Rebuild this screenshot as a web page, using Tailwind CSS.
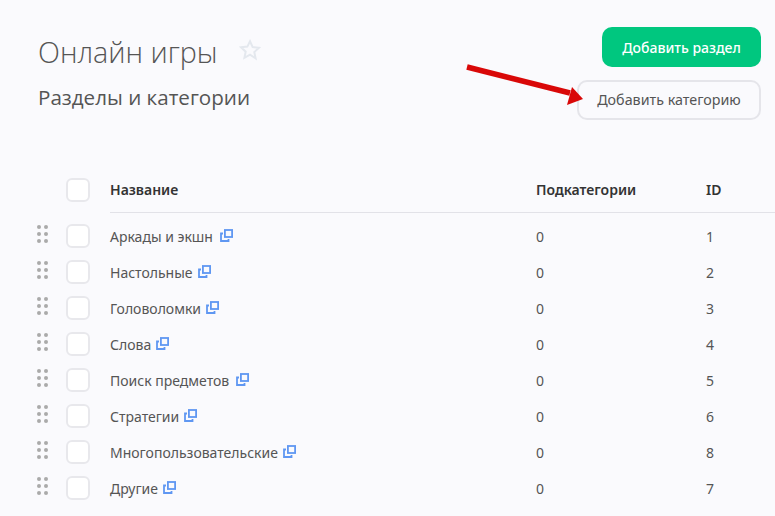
<!DOCTYPE html>
<html><head><meta charset="utf-8">
<script src="https://cdn.jsdelivr.net/npm/@tailwindcss/browser@4"></script>
</head>
<body class="m-0 h-[516px] w-[775px] overflow-hidden bg-[#fafafd] font-['Noto_Sans',sans-serif] text-[14px] text-[#555]">
<div class="relative">
  <div class="flex justify-between pl-[38px] pr-[14px] pt-[27px]">
    <div>
      <div class="flex items-center h-[50px] -mt-[2px]">
        <h1 class="mt-[4px] font-['Open_Sans',sans-serif] font-light text-[28.7px] leading-[50px] text-[#555]">Онлайн игры</h1>
        <svg class="ml-[21px]" width="22" height="22" viewBox="0 0 24 24" fill="none" stroke="#e4e8ee" stroke-width="2.2"><path d="M12 2.5l2.9 6.3 6.9.8-5.1 4.7 1.4 6.8L12 17.1l-6.1 3.5 1.4-6.8-5.1-4.7 6.9-.8z"/></svg>
      </div>
      <h2 class="font-['Open_Sans',sans-serif] text-[20.6px] leading-[30px] mt-[7px] text-[#555]">Разделы и категории</h2>
    </div>
    <div class="flex flex-col items-end gap-[13px]">
      <div class="flex h-[40px] w-[159px] items-center justify-center rounded-[10px] bg-[#00c77f] text-[14px] font-medium text-white">Добавить раздел</div>
      <div class="flex h-[40px] w-[184px] items-center justify-center rounded-[10px] border-2 border-[#e5e5ea] text-[14.3px] text-[#555]">Добавить категорию</div>
    </div>
  </div>

  <div class="mt-[52px] pl-[36px]">
    <div class="flex h-[36px] items-center">
      <div class="w-[30px]"></div>
      <div class="h-[24px] w-[24px] rounded-[6px] border-2 border-[#e8e8ec] bg-white"></div>
      <div class="ml-[20px] flex h-[46px] flex-1 items-center border-b border-[#e2e2e8] font-semibold text-[#333]">
        <div class="w-[426px]">Название</div><div class="w-[170px]">Подкатегории</div><div>ID</div>
      </div>
    </div>
    <div class="mt-[10px]">
      <div class="flex h-[36px] items-center"><svg width="14" height="20" class="mr-[16px] mt-[-4px]" fill="#aaaaaa"><circle cx="3" cy="3" r="2"/><circle cx="10" cy="3" r="2"/><circle cx="3" cy="10" r="2"/><circle cx="10" cy="10" r="2"/><circle cx="3" cy="17" r="2"/><circle cx="10" cy="17" r="2"/></svg><div class="h-[24px] w-[24px] rounded-[6px] border-2 border-[#e8e8ec] bg-white"></div><div class="ml-[20px] flex w-[426px] items-center">Аркады и экшн<svg class="ml-[7px] mt-[-2px]" width="13" height="13" viewBox="0 0 13 13" fill="none" stroke="#5f97f2" stroke-width="1.8"><rect x="4.9" y="1" width="7.2" height="7"/><path d="M3 4.5H1V12h7.5v-2"/></svg></div><div class="w-[170px]">0</div><div>1</div></div>
      <div class="flex h-[36px] items-center"><svg width="14" height="20" class="mr-[16px] mt-[-4px]" fill="#aaaaaa"><circle cx="3" cy="3" r="2"/><circle cx="10" cy="3" r="2"/><circle cx="3" cy="10" r="2"/><circle cx="10" cy="10" r="2"/><circle cx="3" cy="17" r="2"/><circle cx="10" cy="17" r="2"/></svg><div class="h-[24px] w-[24px] rounded-[6px] border-2 border-[#e8e8ec] bg-white"></div><div class="ml-[20px] flex w-[426px] items-center">Настольные<svg class="ml-[5px] mt-[-2px]" width="13" height="13" viewBox="0 0 13 13" fill="none" stroke="#5f97f2" stroke-width="1.8"><rect x="4.9" y="1" width="7.2" height="7"/><path d="M3 4.5H1V12h7.5v-2"/></svg></div><div class="w-[170px]">0</div><div>2</div></div>
      <div class="flex h-[36px] items-center"><svg width="14" height="20" class="mr-[16px] mt-[-4px]" fill="#aaaaaa"><circle cx="3" cy="3" r="2"/><circle cx="10" cy="3" r="2"/><circle cx="3" cy="10" r="2"/><circle cx="10" cy="10" r="2"/><circle cx="3" cy="17" r="2"/><circle cx="10" cy="17" r="2"/></svg><div class="h-[24px] w-[24px] rounded-[6px] border-2 border-[#e8e8ec] bg-white"></div><div class="ml-[20px] flex w-[426px] items-center">Головоломки<svg class="ml-[5px] mt-[-2px]" width="13" height="13" viewBox="0 0 13 13" fill="none" stroke="#5f97f2" stroke-width="1.8"><rect x="4.9" y="1" width="7.2" height="7"/><path d="M3 4.5H1V12h7.5v-2"/></svg></div><div class="w-[170px]">0</div><div>3</div></div>
      <div class="flex h-[36px] items-center"><svg width="14" height="20" class="mr-[16px] mt-[-4px]" fill="#aaaaaa"><circle cx="3" cy="3" r="2"/><circle cx="10" cy="3" r="2"/><circle cx="3" cy="10" r="2"/><circle cx="10" cy="10" r="2"/><circle cx="3" cy="17" r="2"/><circle cx="10" cy="17" r="2"/></svg><div class="h-[24px] w-[24px] rounded-[6px] border-2 border-[#e8e8ec] bg-white"></div><div class="ml-[20px] flex w-[426px] items-center">Слова<svg class="ml-[5px] mt-[-2px]" width="13" height="13" viewBox="0 0 13 13" fill="none" stroke="#5f97f2" stroke-width="1.8"><rect x="4.9" y="1" width="7.2" height="7"/><path d="M3 4.5H1V12h7.5v-2"/></svg></div><div class="w-[170px]">0</div><div>4</div></div>
      <div class="flex h-[36px] items-center"><svg width="14" height="20" class="mr-[16px] mt-[-4px]" fill="#aaaaaa"><circle cx="3" cy="3" r="2"/><circle cx="10" cy="3" r="2"/><circle cx="3" cy="10" r="2"/><circle cx="10" cy="10" r="2"/><circle cx="3" cy="17" r="2"/><circle cx="10" cy="17" r="2"/></svg><div class="h-[24px] w-[24px] rounded-[6px] border-2 border-[#e8e8ec] bg-white"></div><div class="ml-[20px] flex w-[426px] items-center">Поиск предметов<svg class="ml-[7px] mt-[-2px]" width="13" height="13" viewBox="0 0 13 13" fill="none" stroke="#5f97f2" stroke-width="1.8"><rect x="4.9" y="1" width="7.2" height="7"/><path d="M3 4.5H1V12h7.5v-2"/></svg></div><div class="w-[170px]">0</div><div>5</div></div>
      <div class="flex h-[36px] items-center"><svg width="14" height="20" class="mr-[16px] mt-[-4px]" fill="#aaaaaa"><circle cx="3" cy="3" r="2"/><circle cx="10" cy="3" r="2"/><circle cx="3" cy="10" r="2"/><circle cx="10" cy="10" r="2"/><circle cx="3" cy="17" r="2"/><circle cx="10" cy="17" r="2"/></svg><div class="h-[24px] w-[24px] rounded-[6px] border-2 border-[#e8e8ec] bg-white"></div><div class="ml-[20px] flex w-[426px] items-center">Стратегии<svg class="ml-[5px] mt-[-2px]" width="13" height="13" viewBox="0 0 13 13" fill="none" stroke="#5f97f2" stroke-width="1.8"><rect x="4.9" y="1" width="7.2" height="7"/><path d="M3 4.5H1V12h7.5v-2"/></svg></div><div class="w-[170px]">0</div><div>6</div></div>
      <div class="flex h-[36px] items-center"><svg width="14" height="20" class="mr-[16px] mt-[-4px]" fill="#aaaaaa"><circle cx="3" cy="3" r="2"/><circle cx="10" cy="3" r="2"/><circle cx="3" cy="10" r="2"/><circle cx="10" cy="10" r="2"/><circle cx="3" cy="17" r="2"/><circle cx="10" cy="17" r="2"/></svg><div class="h-[24px] w-[24px] rounded-[6px] border-2 border-[#e8e8ec] bg-white"></div><div class="ml-[20px] flex w-[426px] items-center">Многопользовательские<svg class="ml-[5px] mt-[-2px]" width="13" height="13" viewBox="0 0 13 13" fill="none" stroke="#5f97f2" stroke-width="1.8"><rect x="4.9" y="1" width="7.2" height="7"/><path d="M3 4.5H1V12h7.5v-2"/></svg></div><div class="w-[170px]">0</div><div>8</div></div>
      <div class="flex h-[36px] items-center"><svg width="14" height="20" class="mr-[16px] mt-[-4px]" fill="#aaaaaa"><circle cx="3" cy="3" r="2"/><circle cx="10" cy="3" r="2"/><circle cx="3" cy="10" r="2"/><circle cx="10" cy="10" r="2"/><circle cx="3" cy="17" r="2"/><circle cx="10" cy="17" r="2"/></svg><div class="h-[24px] w-[24px] rounded-[6px] border-2 border-[#e8e8ec] bg-white"></div><div class="ml-[20px] flex w-[426px] items-center">Другие<svg class="ml-[5px] mt-[-2px]" width="13" height="13" viewBox="0 0 13 13" fill="none" stroke="#5f97f2" stroke-width="1.8"><rect x="4.9" y="1" width="7.2" height="7"/><path d="M3 4.5H1V12h7.5v-2"/></svg></div><div class="w-[170px]">0</div><div>7</div></div>
    </div>
  </div>

  <svg class="absolute left-[460px] top-[55px]" width="130" height="60" viewBox="0 0 130 60"><path d="M7 12L110 38" stroke="#d90808" stroke-width="5.5"/><path d="M123 44L112 32 107 50z" fill="#d90808"/></svg>
</div>
</body></html>
